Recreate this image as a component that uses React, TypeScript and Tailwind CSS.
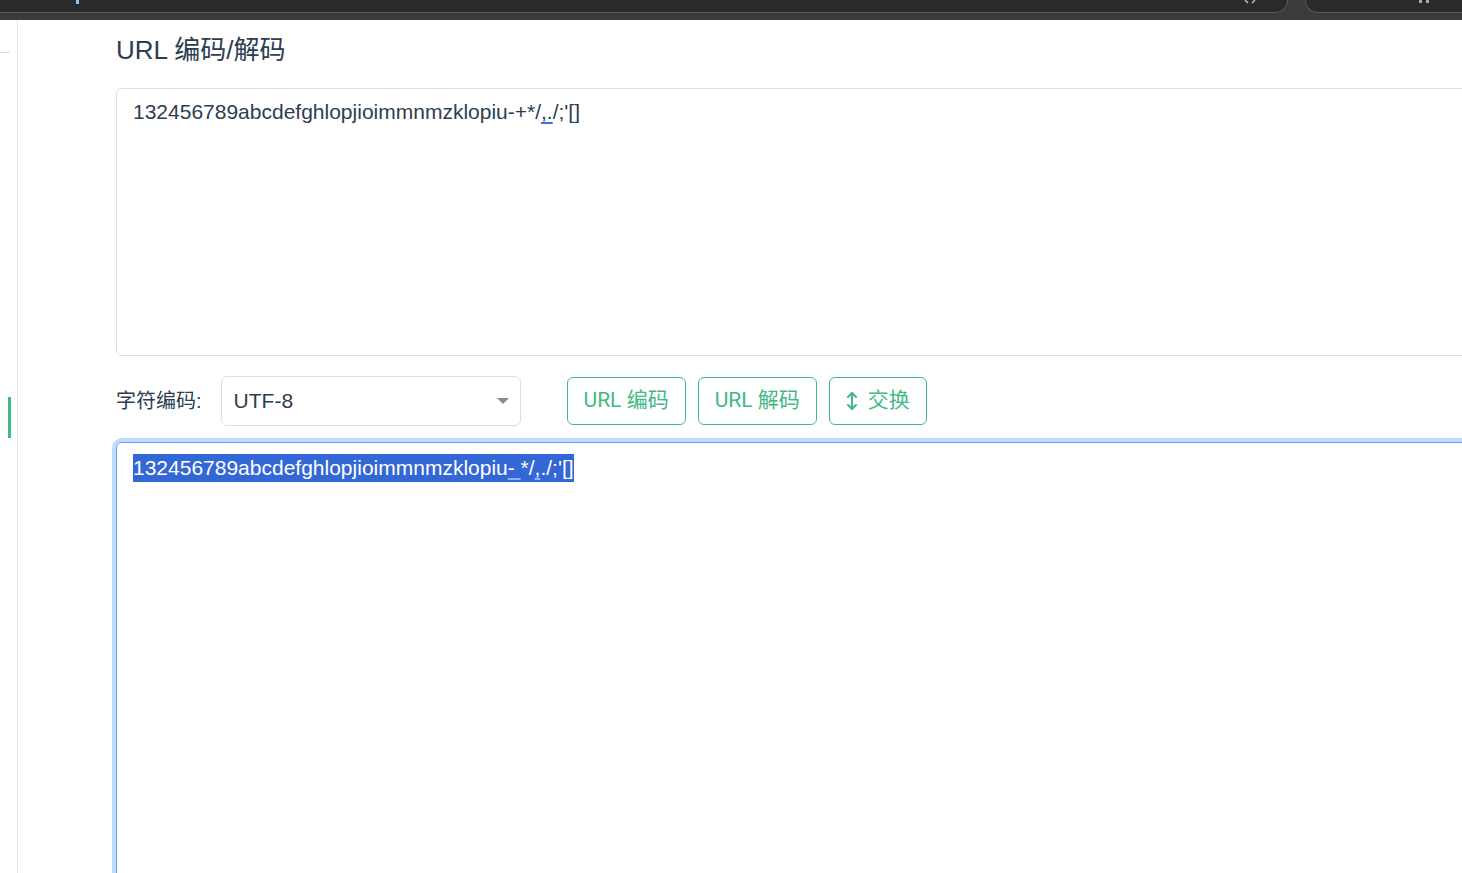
import React from 'react'

const sans = { fontFamily: '"Liberation Sans", Arial, "Noto Sans CJK SC", sans-serif' }
const btnFont = { fontFamily: 'Roboto, "Noto Sans", "Noto Sans CJK SC", sans-serif' }

const SwapIcon = () => (
  <svg width="12" height="20" viewBox="0 0 12 20" fill="none" stroke="currentColor" strokeWidth="2" strokeLinecap="round" strokeLinejoin="round">
    <path d="M6 2v16" />
    <path d="M2 6l4-4 4 4" />
    <path d="M2 14l4 4 4-4" />
  </svg>
)

const ActionButton = ({ children }: { children: React.ReactNode }) => (
  <button
    style={btnFont}
    className="h-[48px] px-[16px] rounded-[6px] border border-[#42b983] text-[#42b983] text-[21px] bg-white flex items-center gap-[10px]"
  >
    {children}
  </button>
)

const App = () => {
  return (
    <div className="w-[1462px] h-[873px] overflow-hidden bg-white flex flex-col" style={sans}>
      {/* browser chrome strip */}
      <div className="h-[20px] bg-[#3b3b3b] flex shrink-0 relative">
        <div className="w-[1288px] h-[13px] bg-[#2a2a2a] border-b border-r border-[#5a5a5a] rounded-br-[18px] relative">
          <span className="absolute left-[76px] top-0 w-[3px] h-[4px] bg-[#8cc4f0]" />
          <svg className="absolute left-[1244px] top-0" width="12" height="4" viewBox="0 0 12 4" stroke="#bbb" strokeWidth="1.5">
            <path d="M1 0l3 3M11 0L8 3" />
          </svg>
          <svg className="absolute left-[1418px] top-0" width="14" height="4" viewBox="0 0 14 4" fill="#aaa">
            <rect x="1" y="0" width="3" height="3" />
            <rect x="8" y="0" width="3" height="3" />
          </svg>
        </div>
        <div className="ml-[17px] flex-1 h-[13px] bg-[#2a2a2a] border-b border-l border-[#5a5a5a] rounded-bl-[18px]" />
      </div>

      <div className="flex flex-1 min-h-0">
        {/* sidebar */}
        <div className="w-[18px] shrink-0 border-r border-[#e6e6e6] relative">
          <div className="absolute left-0 top-[32px] w-[10px] h-px bg-[#dcdcdc]" />
          <div className="absolute left-[8px] top-[377px] w-[3px] h-[41px] bg-[#42b983]" />
        </div>

        {/* main */}
        <div className="flex-1 pl-[98px] pt-[12px] overflow-hidden">
          <h1 className="text-[26px] leading-[36px] text-[#2c3e50] font-normal">URL 编码/解码</h1>

          <div className="mt-[20px] w-[1400px] h-[268px] border border-[#dcdfe6] rounded-[6px] px-[16px] py-[9px] text-[21px] leading-[28px] text-[#2c3e50]">
            132456789abcdefghlopjioimmnmzklopiu-+*/
            <span className="underline decoration-[#3b6fe0] underline-offset-[3px]">,.</span>
            /;'[]
          </div>

          <div className="mt-[20px] flex items-center">
            <span className="text-[20px] text-[#2c3e50] mr-[19px]">字符编码:</span>
            <div className="w-[300px] h-[50px] border border-[#dcdfe6] rounded-[6px] flex items-center justify-between pl-[12px] pr-[10px]">
              <span className="text-[21px] text-[#2c3e50]">UTF-8</span>
              <svg width="14" height="8" viewBox="0 0 14 8">
                <path d="M1 1h12L7 7z" fill="#8a8a8a" />
              </svg>
            </div>
            <div className="ml-[46px] flex gap-[12px]">
              <ActionButton>URL 编码</ActionButton>
              <ActionButton>URL 解码</ActionButton>
              <ActionButton>
                <SwapIcon />
                交换
              </ActionButton>
            </div>
          </div>

          <div className="mt-[16px] w-[1400px] h-[500px] border border-[#6ea0ef] rounded-[6px] shadow-[0_0_0_4px_#c2daff] px-[16px] py-[11px] text-[21px] leading-[28px]">
            <span className="inline-block bg-[#3367d6] text-white leading-[28px]">
              132456789abcdefghlopjioimmnmzklopiu
              <span className="underline decoration-[#8fb2ff] underline-offset-[3px]">- </span>
              */
              <span className="underline decoration-[#8fb2ff] underline-offset-[3px]">,</span>
              ./;'[]
            </span>
          </div>
        </div>
      </div>
    </div>
  )
}

export default App
